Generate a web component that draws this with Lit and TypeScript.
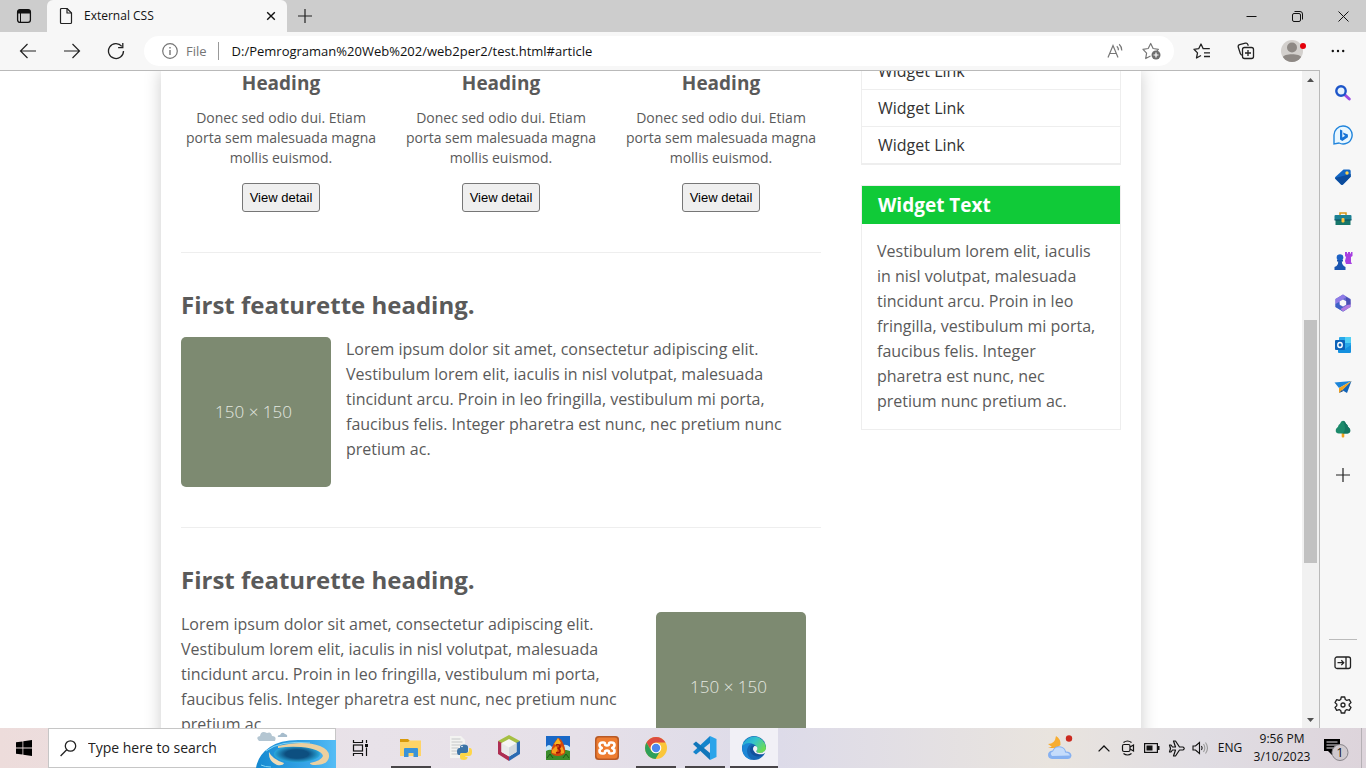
import { LitElement, html, css, nothing, TemplateResult } from "lit";
import { customElement, property } from "lit/decorators.js";

const LOREM =
  "Lorem ipsum dolor sit amet, consectetur adipiscing elit. Vestibulum lorem elit, iaculis in nisl volutpat, malesuada tincidunt arcu. Proin in leo fringilla, vestibulum mi porta, faucibus felis. Integer pharetra est nunc, nec pretium nunc pretium ac.";
const WIDGET_TEXT =
  "Vestibulum lorem elit, iaculis in nisl volutpat, malesuada tincidunt arcu. Proin in leo fringilla, vestibulum mi porta, faucibus felis. Integer pharetra est nunc, nec pretium nunc pretium ac.";

/* ---------- line icons ---------- */
const icons = {
  workspace: html`<svg width="16" height="16" viewBox="0 0 16 16" aria-hidden="true"><rect x="1.6" y="1.6" width="12.8" height="12.8" rx="2.4" fill="none" stroke="#111" stroke-width="1.3"/><path d="M1.5 5.5V4a2.5 2.5 0 0 1 2.5-2.5h8A2.5 2.5 0 0 1 14.5 4v1.5z" fill="#111"/><path d="M4.5 5v9.5" stroke="#111"/></svg>`,
  page: html`<svg width="14" height="18" viewBox="0 0 14 18" fill="none" stroke="#222" stroke-width="1.2" stroke-linejoin="round" aria-hidden="true"><path d="M2.5 1.500h5.500l4.500 4.500v9.500a1 1 0 0 1-1 1h-9a1 1 0 0 1-1-1v-13a1 1 0 0 1 1-1z"/><path d="M8 1.500v4.500h4.500"/></svg>`,
  closeTab: html`<svg width="10" height="10" viewBox="0 0 10 10" stroke="#111" stroke-width="1.4" aria-hidden="true"><path d="M1.200 1.200l7.600 7.600M8.800 1.200L1.200 8.800"/></svg>`,
  plus: html`<svg width="14" height="14" viewBox="0 0 14 14" stroke="#222" stroke-width="1.2" aria-hidden="true"><path d="M7 0v14M0 7h14"/></svg>`,
  minimize: html`<svg width="11" height="11" viewBox="0 0 11 11" stroke="#111" aria-hidden="true"><path d="M.5 5.500h10"/></svg>`,
  restore: html`<svg width="11" height="11" viewBox="0 0 11 11" fill="none" stroke="#111" aria-hidden="true"><rect x=".5" y="2.5" width="8" height="8" rx="1.5"/><path d="M2.500.500h5.500a2.500 2.500 0 0 1 2.500 2.500v5.500"/></svg>`,
  close: html`<svg width="11" height="11" viewBox="0 0 11 11" stroke="#111" aria-hidden="true"><path d="M.5.5l10 10M10.500.500l-10 10"/></svg>`,
  back: html`<svg width="18" height="18" viewBox="0 0 18 18" fill="none" stroke="#222" stroke-width="1.2" aria-hidden="true"><path d="M17 9H1.500M8.500 2L1.500 9l7 7"/></svg>`,
  forward: html`<svg width="18" height="18" viewBox="0 0 18 18" fill="none" stroke="#222" stroke-width="1.2" aria-hidden="true"><path d="M1 9h15.500M9.500 2l7 7-7 7"/></svg>`,
  refresh: html`<svg width="18" height="18" viewBox="0 0 18 18" fill="none" stroke="#222" stroke-width="1.3" aria-hidden="true"><path d="M16.500 9A7.500 7.500 0 1 1 14.800 4.300"/><path d="M15.800 1v4.700h-4.700"/></svg>`,
  info: html`<svg width="18" height="18" viewBox="0 0 18 18" fill="none" stroke="#757575" stroke-width="1.2" aria-hidden="true"><circle cx="9" cy="9" r="7.3"/><path d="M9 8v5M9 5v1.400" stroke-width="1.4"/></svg>`,
  readAloud: html`<svg width="18" height="16" viewBox="0 0 18 16" fill="none" stroke="#777" stroke-width="1.2" aria-hidden="true"><path d="M2 14.500L7 2.500l5 12M3.800 10.500h6.400M10.800 3.200a5 5 0 0 1 1.600 4M13.200 1.200a8.500 8.500 0 0 1 2.600 6.300"/></svg>`,
  starAdd: html`<svg width="20" height="18" viewBox="0 0 20 18" fill="none" stroke="#777" stroke-width="1.2" stroke-linejoin="round" aria-hidden="true"><path d="M8.500 14l-4.800 2.500.9-5.300L1 7.300l5.200-.8L8.700 1.500l2.400 5 5.300.8-1.500 1.500"/><circle cx="14" cy="13" r="4.5" fill="#6e6e6e" stroke="none"/><path d="M14 10.500v5M11.500 13h5" stroke="#fff"/></svg>`,
  favorites: html`<svg width="18" height="18" viewBox="0 0 18 18" fill="none" stroke="#222" stroke-width="1.3" stroke-linejoin="round" aria-hidden="true"><path d="M8 13.500l-4.500 2.500 1-5.100L1 7.300l4.700-.6L8 2l2.200 4.700h6.600M11 10.800h6M11 14.500h6"/></svg>`,
  collections: html`<svg width="18" height="18" viewBox="0 0 18 18" fill="none" stroke="#222" stroke-width="1.3" aria-hidden="true"><path d="M5 13.200a2 2 0 0 1-1.600-1.500L1.300 5.200a2 2 0 0 1 1.300-2.500l5.800-1.500a2 2 0 0 1 2.400 1.200l.5 1.400"/><rect x="5.500" y="5.500" width="11" height="11" rx="2"/><path d="M11 8v6M8 11h6"/></svg>`,
  avatar: html`<svg width="28" height="24" viewBox="0 0 28 24" aria-hidden="true"><circle cx="14" cy="12" r="11" fill="#d3d0cd"/><circle cx="14" cy="8.500" r="5" fill="#8e8985"/><path d="M5 18.300c0-4 18-4 18 0a11 11 0 0 1-18 0z" fill="#8e8985"/><circle cx="25" cy="7" r="3" fill="#e5000b"/></svg>`,
  dots: html`<svg width="14" height="4" viewBox="0 0 14 4" fill="#111" aria-hidden="true"><circle cx="1.800" cy="2" r="1.2"/><circle cx="7" cy="2" r="1.2"/><circle cx="12.200" cy="2" r="1.2"/></svg>`,
  up: html`<svg width="7" height="4" viewBox="0 0 7 4" aria-hidden="true"><path d="M0 4L3.500 0 7 4z" fill="#505050"/></svg>`,
  down: html`<svg width="7" height="4" viewBox="0 0 7 4" aria-hidden="true"><path d="M0 0l3.500 4L7 0z" fill="#505050"/></svg>`,
  dock: html`<svg width="18" height="14" viewBox="0 0 18 14" fill="none" stroke="#222" stroke-width="1.3" aria-hidden="true"><rect x="1" y="1" width="15.500" height="11.500" rx="2"/><path d="M12 1v11.500M3.500 6.700h6M7.300 4.300l2.400 2.400-2.400 2.400"/></svg>`,
  gear: html`<svg width="18" height="18" viewBox="0 0 18 18" fill="none" stroke="#222" stroke-width="1.3" stroke-linejoin="round" aria-hidden="true"><path d="M7.300 1h3.400l.6 2.500 1.500.9 2.500-.8 1.700 3L15.200 8.300v1.400l1.800 1.700-1.700 3-2.500-.8-1.500.9-.6 2.500H7.300l-.6-2.500-1.500-.9-2.500.8-1.700-3 1.800-1.700V8.300L1 6.600l1.700-3 2.500.8 1.500-.9z"/><circle cx="9" cy="9" r="2"/></svg>`,
};

/* ---------- browser sidebar ---------- */
const sideIcons: [string, TemplateResult][] = [
  ["Search", html`<svg width="18" height="18" viewBox="0 0 18 18" fill="none"><path d="M11 11l4.300 4" stroke="#9a4be0" stroke-width="3" stroke-linecap="round"/><circle cx="7" cy="7" r="4.700" fill="#e6f3fc" stroke="#1d55c9" stroke-width="2.4"/></svg>`],
  ["Bing", html`<svg width="20" height="20" viewBox="0 0 20 20"><path d="M10 1a9 9 0 1 1-4 17L1 19V10a9 9 0 0 1 9-9z" fill="#e9f7ff" stroke="#2285dc" stroke-width="1.4"/><path d="M7 4.500l2.300 1v7l3-1.700-1.500-.9-.9-2.400 5 2v2.800L9.300 16 7 14.600z" fill="#1673d6"/></svg>`],
  ["Shopping", html`<svg width="18" height="18" viewBox="0 0 18 18"><path d="M9.500 1.500h5.700a1.500 1.500 0 0 1 1.500 1.500v5.700L9 16.500a1.500 1.500 0 0 1-2 0L1.300 11a1.500 1.500 0 0 1 0-2z" fill="#1467c4"/><path d="M1 10l6 6.500q1 .8 2 0l7.700-7.800V6z" fill="#0c4c9c"/><circle cx="13" cy="5" r="1.700" fill="#ffd34d"/></svg>`],
  ["Tools", html`<svg width="18" height="18" viewBox="0 0 18 18"><path d="M6 5V3h6v2" stroke="#d99a1c" stroke-width="1.5" fill="none"/><path d="M.5 6q0-1 1-1h15q1 0 1 1v4H.5z" fill="#1d8194"/><path d="M1.500 10h15v5h-15z" fill="#17766a"/><path d="M.5 9.500h17v1H.5z" fill="#0b4d5c"/><rect x="7.500" y="8" width="3" height="4.500" rx="1" fill="#ffc43c"/></svg>`],
  ["Games", html`<svg width="20" height="20" viewBox="0 0 20 20"><path d="M12 1h2v1.500h1V1h2v1.500h1V1h1.500v4l-1.500 1v5l1 2h-6l-1-3 1-4-1-1z" fill="#a73fe0"/><circle cx="7" cy="6.500" r="3.300" fill="#1d62c4"/><path d="M4 9h6v1.500H8.800q0 3 2 4.500l1.700 1v3H1.500v-3l2-1q2-1.500 1.700-4.500H4z" fill="#1b55b0"/></svg>`],
  ["Microsoft 365", html`<svg width="18" height="18" viewBox="0 0 18 18"><path d="M9 .5L1.500 5v8L9 17.500l7.500-4.500V5z" fill="#6668cf"/><path d="M9 .5L1.500 5v5l4.500 3V7l6-3.700z" fill="#8f7be6"/><path d="M1.500 10v3L9 17.500l3.500-2L6 11.500 5 8z" fill="#3d62c6"/><path d="M16.500 8v5L9 17.500 6.500 15l6-3.500z" fill="#b27be0"/><path d="M12 3l4.500 2.500v5L12 11z" fill="#4a4fb4"/><path d="M9 5.500l3.200 1.800v3.500L9 12.600l-3.200-1.800V7.300z" fill="#f7f7f7"/></svg>`],
  ["Outlook", html`<svg width="18" height="18" viewBox="0 0 18 18"><rect x="5" y="1" width="12" height="13" rx="1" fill="#28a8ea"/><path d="M11 1h6v6h-6z" fill="#50d0f5"/><path d="M4 9l7 4 6-4v7q0 1-1 1H5q-1 0-1-1z" fill="#1490df"/><rect x="1" y="4" width="10" height="10" rx="1" fill="#0c62b8"/><ellipse cx="6" cy="9" rx="2.2" ry="2.5" fill="none" stroke="#fff" stroke-width="1.4"/></svg>`],
  ["Drop", html`<svg width="18" height="18" viewBox="0 0 18 18"><path d="M.5 4.500L17.500 3 5 10z" fill="#1b84d8"/><path d="M17.500 3L13 15l-5-3z" fill="#1164b8"/><path d="M17.500 3L5 10v5l3.500-3z" fill="#f2a21e"/><path d="M5 15l3-3 1.500 1z" fill="#17437c"/></svg>`],
  ["Browser essentials", html`<svg width="18" height="18" viewBox="0 0 18 18"><rect x="7.700" y="12" width="2.600" height="5.500" rx="1" fill="#f2a31d"/><path d="M9 .7q2 0 3 3 1.700 1 2 3 2.700 2 2.300 4.500-.8 2.500-3.300 2.300H5Q2.300 13.700 1.700 11.200 1.300 8.700 4 6.700q.3-2 2-3 1-3 3-3z" fill="#1c8a6b"/><path d="M9 .7q2 0 3 3 1.700 1 2 3 2.700 2 2.300 4.500-.8 2.500-3.300 2.300H9q4-5 0-12.800z" fill="#147561"/></svg>`],
];

/* ---------- taskbar ---------- */
const taskApps: { name: string; state: string; icon: TemplateResult }[] = [
  { name: "File Explorer", state: "open", icon: html`<svg width="24" height="24" viewBox="0 0 24 24"><path d="M1 3h8l2 2v4H1z" fill="#d99a0b"/><path d="M1 6h8l2-1.500h11V20H1z" fill="#ffd467"/><path d="M5 21v-8q0-1 1-1h12q1 0 1 1v8h-4.500v-4h-5v4z" fill="#3b93d8"/></svg>` },
  { name: "Python", state: "", icon: html`<svg width="24" height="24" viewBox="0 0 24 24"><path d="M2 0h11l4 4v18H2z" fill="#f3f3f1"/><path d="M3.500 3h9M3.500 6h11M3.500 9h10M3.500 12h7M3.500 15h6M3.500 18h7" stroke="#c5c7c8"/><path d="M12 15v-4q0-2.500 4-2.500t4 2.500v4.500q0 1.500-2 1.500h-4q-2 0-2 2h-1q-2 0-2-3.500T11.500 12H16" fill="#3c74a7"/><path d="M21 12h1q2 0 2 4t-3 4h-4q0 1 2.500 1v1q-.5 2-3.500 2-4 0-4-2.500V19q0-2 2-2h4q3 0 3-3z" fill="#ffd647"/><circle cx="14" cy="10.500" r=".8" fill="#fff"/></svg>` },
  { name: "NetBeans", state: "", icon: html`<svg width="24" height="26" viewBox="0 0 24 26"><path d="M12 0l11 6-3 3-8-4-8 4-3-3z" fill="#a5bf43"/><path d="M1 6l4 2v9l7 4v5L1 19z" fill="#ae2f53"/><path d="M23 6l-4 2v9l-7 4v5l11-7z" fill="#2c6bb2"/><path d="M12 4l7.500 4v9L12 21.500 4.500 17V8z" fill="#f6f6f4"/><path d="M12 12.500l7.500-4.500v9L12 21.500z" fill="#d4d9de"/><path d="M4.500 8l7.500 4.500V21L4.500 17z" fill="#e9ebeb"/></svg>` },
  { name: "Dragon game", state: "", icon: html`<svg width="24" height="24" viewBox="0 0 24 24"><path d="M0 0h24v24H0z" fill="#1968c6"/><path d="M0 11q3-4 6 0 4-5 9-1 5-3 9 1v6H0z" fill="#c4e8fa"/><path d="M0 15q5-3 9 1 6-4 15-1v9H0z" fill="#3c8c2b"/><path d="M12 2q3 0 5.500 6t1.500 9q-2 3-7 3t-7-3q0-5 2.500-9T12 2z" fill="#d4490d"/><path d="M12 2l3 5-3 3-4-2z" fill="#f8b51f"/><path d="M6 14l4-4 2 3-2 5-4-1zM18 15l-2-5-2 3 1 5 3-1z" fill="#f7a01b"/><path d="M10 9q4-1 4 1.500 0 1.500-2.500 2 3 .5 2.500 3-1 2-4 1" fill="none" stroke="#a0150b" stroke-width="1.5"/><path d="M1 22l3-4 3 4M17 22l3-4 3 4" stroke="#1d5a19" fill="none"/></svg>` },
  { name: "XAMPP", state: "", icon: html`<svg width="24" height="24" viewBox="0 0 24 24"><rect width="24" height="24" rx="3.500" fill="#b85a26"/><rect x="1.500" y="1.500" width="21" height="21" rx="3" fill="#ee7d31"/><path d="M7.500 6.500q-3 0-3 2.500 0 2 2.300 3-2.300 1-2.300 3 0 2.500 3 2.500h1q1.500 0 1.500-1.500t2-1.500 2 1.500 1.500 1.500h1q3 0 3-2.500 0-2-2.300-3 2.300-1 2.300-3 0-2.500-3-2.500h-1q-1.500 0-1.500 1.500t-2 1.500-2-1.500-1.500-1.500z" fill="none" stroke="#fff" stroke-width="2.6" stroke-linejoin="round"/></svg>` },
  { name: "Google Chrome", state: "open", icon: html`<svg width="24" height="24" viewBox="0 0 24 24"><circle cx="12" cy="12" r="11" fill="#fbc63a"/><path d="M2.500 6.500A11 11 0 0 1 21.500 6.500H12a5.500 5.500 0 0 0-4.800 8.200z" fill="#dc4c41"/><path d="M2.500 6.500A11 11 0 0 0 11.500 23l5-8.500a5.500 5.500 0 0 1-9.300.2z" fill="#2fa05a"/><circle cx="12" cy="12" r="5.300" fill="#fff"/><circle cx="12" cy="12" r="4.200" fill="#4c87ee"/></svg>` },
  { name: "Visual Studio Code", state: "open", icon: html`<svg width="24" height="24" viewBox="0 0 24 24"><path d="M17 0l6.500 3v18L17 24z" fill="#2ba4ea"/><path d="M17 0v7L3 18.500 0 16z" fill="#1584cc"/><path d="M17 24v-7L3 5.500 0 8z" fill="#1176ba"/></svg>` },
  { name: "Microsoft Edge", state: "active", icon: html`<svg width="24" height="24" viewBox="0 0 24 24"><defs><linearGradient id="eg" x1="0" x2="1" y2=".6"><stop stop-color="#1d9ade"/><stop offset=".5" stop-color="#35c3cc"/><stop offset="1" stop-color="#6bdc55"/></linearGradient></defs><circle cx="12" cy="12" r="12" fill="#1667b5"/><path d="M.2 10.500A12 12 0 0 1 24 12q0 5-6 5-4 0-4-2 1.500-1 1-3-1-4-6-4.500-5-.2-8.800 3z" fill="url(#eg)"/><path d="M1 9.500q4-3.500 9-2-5 2-5 8 .5 5 5 8.300A12 12 0 0 1 .2 14q-.4-2 .8-4.500z" fill="#1d86d6"/><path d="M14 15q-1.500 1-2.500-.5-1-3 1.500-4.500Q9 8.500 8 13q0 6 7 7.500 4 .5 7-2.500-1 2-2.500 3 2.500-2 4-5-2 1.200-5 1.200-4 0-4.500-2.200z" fill="#12509c"/><path d="M14.200 15q1.800-1.200.8-4-1-1.300-2.600-1-2.200 2-.9 4.500.8 2.500 4.500 3.500 4 1 7.700-1.200l.8 2.200h2V10l-2.500 3q-1 4-6.200 4-3.600-.2-3.600-2z" fill="#f1f0f6"/></svg>` },
];

const island = html`<svg class="island" width="80" height="37" viewBox="0 0 80 37" aria-hidden="true"><defs><linearGradient id="sea" x2="1"><stop stop-color="#1589d0"/><stop offset=".7" stop-color="#3aa7ea"/><stop offset="1" stop-color="#56bdf5"/></linearGradient><radialGradient id="deep"><stop offset=".5" stop-color="#0d4f80"/><stop offset="1" stop-color="#2ba9dd"/></radialGradient></defs><path d="M0 37Q2 24 14 16 24 9 42 9h38v28z" fill="url(#sea)"/><path d="M10 20q14-11 44-8M5 34q4 2 10 2" stroke="#7fd5f7" fill="none"/><ellipse cx="41" cy="23" rx="23" ry="8.500" fill="url(#deep)"/><path d="M22 15q26-6 42 0 10 4 9 11-1 8-14 8-5 0-5-2 11-2 13-7-2-7-22-9-12-1-23 1z" fill="#ecd0a0"/><path d="M13 21q3 7 15 11-1 3-7 2-9-4-8-13z" fill="#f1dbb5"/><path d="M3 10q-4-4 1-5 1-6 7-3 4-2 5 3 5 0 3 5z" fill="#b4c6d2"/><path d="M22 6q-1-2 2-2 2-4 5-1 3 1 2 3z" fill="#a6bccc"/></svg>`;

@customElement("icon-button")
class IconButton extends LitElement {
  @property() label = "";
  @property() icon: TemplateResult | typeof nothing = nothing;
  static styles = css`
    :host { display: flex; }
    button { flex: 1; display: flex; align-items: center; justify-content: center; border: 0; padding: 0; margin: 0; background: none; color: inherit; }
    svg { display: block; }
  `;
  render() {
    return html`<button aria-label=${this.label}>${this.icon}</button>`;
  }
}

@customElement("web-page")
class WebPage extends LitElement {
  static styles = css`
    * { box-sizing: border-box; }
    :host { display: block; background: #fff; color: #5a5a5a; font: 16px/25px "Open Sans", sans-serif; overflow: hidden; }
    .container { display: flex; align-items: flex-start; max-width: 980px; min-height: 100%; margin: 0 auto; background: #fff; box-shadow: 0 0 16px #ccc; }
    main { flex: 1; min-width: 0; padding: 0 20px; }
    aside { flex: none; width: 300px; padding: 0 20px; }
    h2, h3, p, ul { margin: 0; padding: 0; }
    .boxes { display: grid; grid-template-columns: repeat(3, 1fr); gap: 20px; }
    .box { text-align: center; font-size: 14px; line-height: 20px; }
    .box h3 { font-size: 19px; line-height: 25px; margin-bottom: 12px; }
    .box p { margin-bottom: 15px; }
    .box button { height: 29px; padding: 0 7px; border: 1px solid #767676; border-radius: 3px; background: #efefef; color: #000; font: 13px "Liberation Sans", Arial, sans-serif; vertical-align: top; }
    hr { border: 0; border-top: 1px solid #eee; margin: 40px 0; height: 0; }
    h2 { font-size: 24px; line-height: 24px; margin-bottom: 20px; }
    .feature { display: flex; gap: 15px; }
    .feature.reverse { flex-direction: row-reverse; gap: 0; padding-right: 15px; }
    .feature p { flex: 1; }
    .thumb { flex: none; display: flex; align-items: center; justify-content: center; width: 150px; height: 150px; padding: 0 5px 2px 0; border-radius: 5px; background: #7d8a71; color: #e4e8e0; font-size: 17px; font-weight: 300; }
    .widget { border: 1px solid #eee; margin-bottom: 20px; }
    .links { margin-top: -19px; list-style: none; }
    .links a { display: block; padding: 0 16px; border-bottom: 1px solid #eee; line-height: 36px; color: #333; text-decoration: none; }
    .widget h3 { padding: 0 16px; background: #10ca38; color: #fff; font-size: 19px; line-height: 38px; }
    .widget p { padding: 15px; }
  `;
  render() {
    return html`<div class="container">
      <main>
        <section class="boxes">
          ${[1, 2, 3].map(() => html`<div class="box">
            <h3>Heading</h3>
            <p>Donec sed odio dui. Etiam porta sem malesuada magna mollis euismod.</p>
            <button>View detail</button>
          </div>`)}
        </section>
        <hr />
        <article>
          <h2>First featurette heading.</h2>
          <div class="feature"><div class="thumb">150 × 150</div><p>${LOREM}</p></div>
        </article>
        <hr />
        <article>
          <h2>First featurette heading.</h2>
          <div class="feature reverse"><div class="thumb">150 × 150</div><p>${LOREM}</p></div>
        </article>
      </main>
      <aside>
        <ul class="widget links">
          ${[1, 2, 3].map(() => html`<li><a href="#">Widget Link</a></li>`)}
        </ul>
        <div class="widget"><h3>Widget Text</h3><p>${WIDGET_TEXT}</p></div>
      </aside>
    </div>`;
  }
}

@customElement("task-bar")
class TaskBar extends LitElement {
  static styles = css`
    * { box-sizing: border-box; }
    :host { display: flex; height: 40px; color: #111; font: 12px/18px "Open Sans", sans-serif; background: linear-gradient(90deg, #eddcdb 0, #e8e2e9 27%, #e6e0e8 42%, #dddbe9 57%, #e9e4de 77%, #e0dde3 88%, #ddd4db 100%); }
    svg { display: block; }
    icon-button { width: 48px; }
    .search { position: relative; width: 288px; background: #fff; border: 1px solid #c6c6c6; display: flex; align-items: center; padding-left: 11px; gap: 11px; }
    .search input { flex: 1; min-width: 0; border: 0; outline: 0; padding: 0; background: none; font: 14px/20px "Open Sans", sans-serif; color: #222; }
    .search input::placeholder { color: #222; opacity: 1; }
    .search label { display: flex; }
    .island { position: absolute; right: -1px; bottom: -1px; }
    .apps { display: flex; gap: 1px; margin-left: 3px; }
    .app { display: flex; }
    .app.open { background: linear-gradient(#484548, #484548) center bottom / 40px 2px no-repeat; }
    .app.active { background: linear-gradient(#484548, #484548) center bottom / 48px 2px no-repeat #f1f0f6; }
    .tray { margin-left: auto; display: flex; align-items: center; padding-right: 4px; }
    .tray icon-button { width: 24px; height: 40px; }
    .tray .weather { width: 64px; }
    .lang { width: 32px; padding-left: 4px; text-align: center; }
    .clock { width: 76px; text-align: center; }
    .clock time { display: block; }
    .tray .notes { width: 42px; padding-right: 10px; border-right: 1px solid #b5b0b5; }
  `;
  render() {
    return html`
      <icon-button label="Start" .icon=${html`<svg width="16" height="16" viewBox="0 0 16 16"><path d="M0 2.300L6.500 1.400v6.200H0zM7.300 1.300L16 0v7.600H7.300zM0 8.400h6.500v6.200L0 13.700zM7.300 8.400H16V16l-8.700-1.300z"/></svg>`}></icon-button>
      <div class="search">
        <label for="q" aria-label="Search"><svg width="17" height="17" viewBox="0 0 17 17" fill="none" stroke="#222" stroke-width="1.3"><circle cx="10.500" cy="6" r="5.200"/><path d="M6.700 9.800L.6 16"/></svg></label>
        <input id="q" type="text" placeholder="Type here to search" />
        ${island}
      </div>
      <icon-button label="Task View" .icon=${html`<svg width="17" height="16" viewBox="0 0 17 16" fill="none" stroke="#111" stroke-width="1.2"><path d="M1.500 0v2.500h9V0M1.500 16v-2.500h9V16M14.500 0v3M14.500 7.500V16"/><rect x="1.500" y="5" width="9" height="6"/><path d="M13 4h3v3h-3z" fill="#111" stroke="none"/></svg>`}></icon-button>
      <div class="apps">
        ${taskApps.map((a) => html`<div class="app ${a.state}"><icon-button label=${a.name} .icon=${a.icon}></icon-button></div>`)}
      </div>
      <div class="tray">
        <icon-button class="weather" label="Weather" .icon=${html`<svg width="26" height="26" viewBox="0 0 26 26"><path d="M10 2q4 7-3 11H1q6-1 5-5 4-1 4-6z" fill="#f5a623"/><path d="M9 1q5 3 4.500 9L8 14 1 9q7 0 8-8z" fill="#f7ad31"/><path d="M5 24q-4-.5-4-4 0-4 4.500-4.500Q8 10 14 11.500q4 1 5 5 5 0 5.500 4-.5 3.500-4 3.500z" fill="#86b1f1"/><path d="M5 21q-3-3 1-4.500Q8 11 14 12.500q4 1 4 5 4 0 5 3z" fill="#c5dcfb"/><circle cx="22" cy="3.500" r="3.200" fill="#cb2a20"/></svg>`}></icon-button>
        <icon-button label="Show hidden icons" .icon=${html`<svg width="12" height="7" viewBox="0 0 12 7" fill="none" stroke="#111" stroke-width="1.3"><path d="M.6 6.400L6 1l5.400 5.400"/></svg>`}></icon-button>
        <icon-button label="Meet Now" .icon=${html`<svg width="14" height="16" viewBox="0 0 14 16" fill="none" stroke="#111" stroke-width="1.2"><rect x="1.500" y="4.500" width="7.500" height="7" rx="1.500"/><path d="M9 7l3.500-2v6L9 9M2.500 2.500q4-3 8 0M2.500 13.500q4 3 8 0"/></svg>`}></icon-button>
        <icon-button label="Battery" .icon=${html`<svg width="16" height="10" viewBox="0 0 16 10"><rect x=".6" y=".6" width="12.800" height="8.800" fill="none" stroke="#111" stroke-width="1.2"/><path d="M2.500 2.500h6v5h-6zM14 3h1.500v4H14z" fill="#111"/></svg>`}></icon-button>
        <icon-button label="Airplane mode" .icon=${html`<svg width="17" height="17" viewBox="0 0 17 17" fill="none" stroke="#111" stroke-width="1.2" stroke-linejoin="round"><path d="M1.500 5H3l1.500 2h3L5.500 1h2l4 6H15q2.500 1.500 0 3h-3.500l-4 6h-2l2-6h-3L3 12H1.500l1-3.500z"/></svg>`}></icon-button>
        <icon-button label="Volume" .icon=${html`<svg width="17" height="14" viewBox="0 0 17 14" fill="none" stroke="#111" stroke-width="1.1"><path d="M1 5h2.500l4-3.500v11L3.500 9H1z"/><path d="M9.500 5q1.300 2 0 4"/><path d="M11.500 3q2.600 4 0 8M13.500 1.500q4 5.500 0 11" stroke="#999"/></svg>`}></icon-button>
        <span class="lang">ENG</span>
        <div class="clock"><time>9:56 PM</time><time>3/10/2023</time></div>
        <icon-button class="notes" label="Notifications" .icon=${html`<svg width="26" height="26" viewBox="0 0 26 26"><path d="M1 4h16v12H9v4l-4-4H1z" fill="#000"/><path d="M3.500 7h11M3.500 10h11M3.500 13h7" stroke="#e5dfe5"/><circle cx="17" cy="17.500" r="8" fill="#cfc9ce" stroke="#88858a"/><text x="17" y="22" text-anchor="middle" font-family="Open Sans" font-size="13" fill="#111">1</text></svg>`}></icon-button>
      </div>`;
  }
}

@customElement("app-root")
class AppRoot extends LitElement {
  static styles = css`
    * { box-sizing: border-box; }
    :host { display: flex; flex-direction: column; height: 100vh; overflow: hidden; background: #f7f7f7; font: 12px/16px "Open Sans", sans-serif; color: #111; }
    svg { display: block; }
    .titlebar { display: flex; height: 32px; background: #cdcdcd; }
    .titlebar .workspace { width: 47px; }
    .tab { display: flex; align-items: center; width: 240px; padding: 0 6px 0 12px; background: #f7f7f7; border-radius: 6px 6px 0 0; }
    .tab span { flex: 1; padding-left: 11px; }
    .tab icon-button { width: 20px; height: 20px; }
    .new { width: 35px; }
    .window { display: flex; margin-left: auto; }
    .window icon-button { width: 46px; }
    .toolbar { display: flex; align-items: center; height: 38px; padding: 0 6px; }
    .toolbar > icon-button { width: 44px; height: 38px; }
    .toolbar > .profile { width: 48px; }
    .address { flex: 1; display: flex; align-items: center; height: 30px; margin: 0 6px; padding: 0 4px 0 17px; border-radius: 15px; background: #fff; color: #757575; font-size: 13px; }
    .address label { display: flex; align-items: center; gap: 7px; padding-right: 11px; border-right: 1px solid #999; }
    .address input { flex: 1; border: 0; outline: 0; padding: 0 0 0 13px; background: none; color: #111; font: 13px/20px "Open Sans", sans-serif; }
    .address icon-button { width: 37px; }
    .body { flex: 1; min-height: 0; display: flex; }
    .view { flex: 1; min-width: 0; display: flex; border-top: 1px solid #b9b9b9; border-right: 1px solid #b9b9b9; }
    web-page { flex: 1; min-width: 0; }
    .scroll { width: 17px; display: flex; flex-direction: column; padding: 0 2px; background: #f1f1f1; }
    .arrow { display: flex; align-items: center; justify-content: center; height: 17px; }
    .track { flex: 1; display: grid; grid-template-rows: 232fr 243fr 148fr; }
    .thumb { grid-row: 2; background: #c1c1c1; }
    .sidebar { width: 46px; display: flex; flex-direction: column; padding: 2px 0; }
    .sidebar icon-button { height: 42px; }
    .add { margin-top: 4px; }
    .foot { margin-top: auto; }
    .foot::before { content: ""; display: block; height: 1px; margin: 0 9px 2px; background: #bbb; }
  `;
  render() {
    const b = (label: string, icon: TemplateResult, cls = "") =>
      html`<icon-button class=${cls} label=${label} .icon=${icon}></icon-button>`;
    return html`
      <div class="titlebar">
        ${b("Tab actions", icons.workspace, "workspace")}
        <div class="tab">${icons.page}<span>External CSS</span>${b("Close tab", icons.closeTab)}</div>
        ${b("New tab", icons.plus, "new")}
        <div class="window">${b("Minimize", icons.minimize)}${b("Restore", icons.restore)}${b("Close", icons.close)}</div>
      </div>
      <div class="toolbar">
        ${b("Back", icons.back)}${b("Forward", icons.forward)}${b("Refresh", icons.refresh)}
        <div class="address">
          <label for="url">${icons.info}<span>File</span></label>
          <input id="url" type="text" .value=${"D:/Pemrograman%20Web%202/web2per2/test.html#article"} />
          ${b("Read aloud", icons.readAloud)}${b("Add to favorites", icons.starAdd)}
        </div>
        ${b("Favorites", icons.favorites)}${b("Collections", icons.collections)}${b("Profile", icons.avatar, "profile")}${b("Settings and more", icons.dots)}
      </div>
      <div class="body">
        <div class="view">
          <web-page></web-page>
          <div class="scroll">
            <div class="arrow">${icons.up}</div>
            <div class="track"><div class="thumb"></div></div>
            <div class="arrow">${icons.down}</div>
          </div>
        </div>
        <div class="sidebar">
          ${sideIcons.map(([label, icon]) => b(label, icon))}
          ${b("Customize", icons.plus, "add")}
          <div class="foot">${b("Hide sidebar", icons.dock)}${b("Settings", icons.gear)}</div>
        </div>
      </div>
      <task-bar></task-bar>`;
  }
}
